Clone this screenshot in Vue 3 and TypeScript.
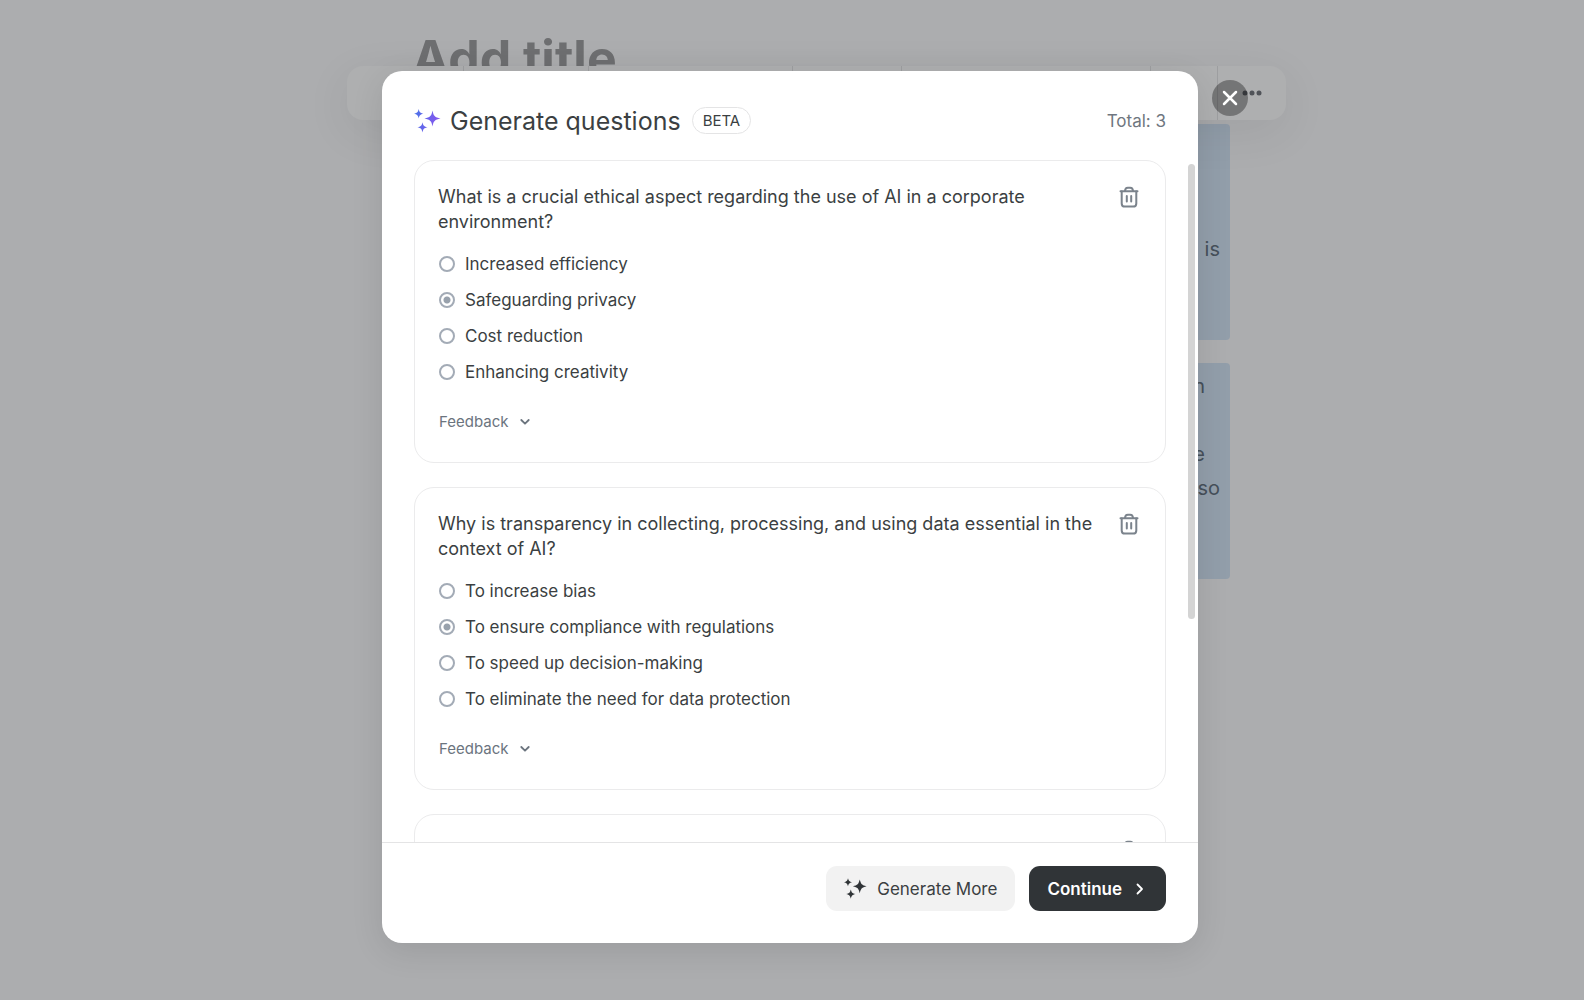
<script setup lang="ts">
import { ref } from 'vue'

interface Question {
  id: number
  text: string
  options: string[]
  answer: number
}

const questions = ref<Question[]>([
  {
    id: 1,
    text: 'What is a crucial ethical aspect regarding the use of AI in a corporate environment?',
    options: ['Increased efficiency', 'Safeguarding privacy', 'Cost reduction', 'Enhancing creativity'],
    answer: 1,
  },
  {
    id: 2,
    text: 'Why is transparency in collecting, processing, and using data essential in the context of AI?',
    options: [
      'To increase bias',
      'To ensure compliance with regulations',
      'To speed up decision-making',
      'To eliminate the need for data protection',
    ],
    answer: 1,
  },
  { id: 3, text: '', options: [], answer: 0 },
])

const total = questions.value.length

function remove(id: number) {
  questions.value = questions.value.filter((q) => q.id !== id)
}
</script>

<template>
  <div class="screen">
    <div class="editor">
      <h1 class="doc-title">Add title</h1>
      <div class="blocks">
        <div class="block">
          <p></p>
          <p></p>
          <p></p>
          <p>is</p>
        </div>
        <div class="block">
          <p class="short">n</p>
          <p></p>
          <p class="short">e</p>
          <p>so</p>
        </div>
      </div>
      <div class="toolbar">
        <span class="tool tool-a"></span>
        <span class="tool tool-b"></span>
        <span class="tool tool-c"></span>
        <span class="tool tool-d"></span>
        <span class="tool tool-e"></span>
        <span class="tool tool-f"></span>
        <span class="more">
          <svg width="20" height="6" viewBox="0 0 20 6" fill="#505358">
            <circle cx="3" cy="3" r="2.5" />
            <circle cx="10" cy="3" r="2.5" />
            <circle cx="17" cy="3" r="2.5" />
          </svg>
        </span>
      </div>
    </div>

    <div class="overlay">
      <section class="modal" role="dialog" aria-labelledby="dialog-title">
        <header class="head">
          <svg class="spark" width="27" height="26" viewBox="0 0 27 26">
            <defs>
              <linearGradient id="spark-fill" gradientUnits="userSpaceOnUse" x1="0" y1="6" x2="27" y2="12">
                <stop offset="0" stop-color="#4a72e8" />
                <stop offset="1" stop-color="#8a55ee" />
              </linearGradient>
            </defs>
            <g fill="url(#spark-fill)">
              <path d="M18.500 2.500C19.500 8 20.800 9.300 26.500 10.500C20.800 11.700 19.500 13 18.500 18.500C17.500 13 16.200 11.700 10.500 10.500C16.200 9.300 17.500 8 18.500 2.500Z" />
              <path d="M4.700 1C5.400 4.200 6.200 5 9.400 5.700C6.200 6.400 5.400 7.200 4.700 10.400C4 7.200 3.200 6.400 0 5.700C3.200 5 4 4.200 4.700 1Z" />
              <path d="M8.500 14.200C9.300 17.800 10 18.500 13.600 19.300C10 20.100 9.300 20.800 8.500 24.400C7.700 20.800 7 20.100 3.400 19.300C7 18.500 7.700 17.800 8.500 14.200Z" />
            </g>
          </svg>
          <h2 id="dialog-title">Generate questions</h2>
          <span class="beta">BETA</span>
          <span class="total">Total: {{ total }}</span>
        </header>

        <div class="list">
          <article v-for="q in questions" :key="q.id" class="card">
            <div class="card-top">
              <p :id="'q' + q.id" class="question">{{ q.text }}</p>
              <button type="button" class="trash" aria-label="Delete question" @click="remove(q.id)">
                <svg width="20" height="22" viewBox="0 0 20 22" fill="none" stroke="#7b838c" stroke-width="2" stroke-linecap="round" stroke-linejoin="round">
                  <path d="M1.500 5.200H18.500" />
                  <path d="M6 5Q6.200 1.700 8.800 1.700H11.200Q13.800 1.700 14 5" />
                  <path d="M2.700 5.400V17.400Q2.700 20.600 5.900 20.600H14.100Q17.300 20.600 17.300 17.400V5.400" />
                  <path d="M7.800 10V15.400M12.200 10V15.400" />
                </svg>
              </button>
            </div>
            <div v-if="q.options.length" class="options" role="radiogroup" :aria-labelledby="'q' + q.id">
              <label v-for="(o, i) in q.options" :key="o" class="option">
                <input v-model="q.answer" type="radio" :name="'answer-' + q.id" :value="i" />
                <span>{{ o }}</span>
              </label>
            </div>
            <button v-if="q.options.length" type="button" class="feedback">
              Feedback
              <svg width="10" height="8" viewBox="0 0 10 8" fill="none" stroke="#6b747e" stroke-width="1.800" stroke-linecap="round" stroke-linejoin="round">
                <path d="M1.300 2L5 5.700L8.700 2" />
              </svg>
            </button>
          </article>
        </div>
        <span class="thumb"></span>

        <footer class="foot">
          <button type="button" class="btn generate">
            <svg width="23" height="23" viewBox="0 0 27 26" fill="#303437">
              <path d="M18.500 2.500C19.900 8 21 9.100 26.500 10.500C21 11.900 19.900 13 18.500 18.500C17.100 13 16 11.900 10.500 10.500C16 9.100 17.100 8 18.500 2.500Z" />
              <path d="M4.700 1C5.700 4.200 6.200 4.700 9.400 5.700C6.200 6.700 5.700 7.200 4.700 10.400C3.700 7.200 3.200 6.700 0 5.700C3.200 4.700 3.700 4.200 4.700 1Z" />
              <path d="M8 14.200C9.100 18 9.600 18.500 13.400 19.600C9.600 20.700 9.100 21.200 8 25C6.900 21.200 6.400 20.700 2.600 19.600C6.400 18.500 6.900 18 8 14.200Z" />
            </svg>
            Generate More
          </button>
          <button type="button" class="btn continue">
            Continue
            <svg width="10" height="14" viewBox="0 0 10 14" fill="none" stroke="#fff" stroke-width="1.800" stroke-linecap="round" stroke-linejoin="round">
              <path d="M2.500 2.500L7 7L2.500 11.500" />
            </svg>
          </button>
        </footer>

        <button type="button" class="close" aria-label="Close">
          <svg width="16" height="16" viewBox="0 0 16 16" stroke="#fff" stroke-width="2.500" stroke-linecap="round">
            <path d="M2 2L14 14M14 2L2 14" />
          </svg>
        </button>
      </section>
    </div>
  </div>
</template>

<style>
body {
  background: #acadaf;
}
</style>

<style scoped>
.screen,
.screen * {
  box-sizing: border-box;
}
.screen {
  position: relative;
  height: 100vh;
  overflow: hidden;
  background: #acadaf;
  font-family: Inter, sans-serif;
  color: #3b3f42;
}
button {
  margin: 0;
  padding: 0;
  border: 0;
  background: none;
  font: inherit;
  color: inherit;
  cursor: pointer;
}
h1,
h2,
p {
  margin: 0;
}
svg {
  display: block;
  flex: none;
}

.editor {
  width: 820px;
  margin: 0 auto;
  padding: 28px 4px 0 30px;
}
.doc-title {
  font-size: 50px;
  line-height: 60px;
  font-weight: 700;
  color: #6e6f71;
}
.toolbar {
  position: absolute;
  top: 66px;
  left: calc(50% - 445px);
  width: 939px;
  height: 54px;
  display: flex;
  border-radius: 16px;
  background: #aeafb0;
  box-shadow: 0 12px 48px rgba(0, 0, 0, 0.07);
}
.tool {
  border-right: 1px solid #9d9ea0;
}
.tool-a { width: 117px; }
.tool-b { width: 125px; }
.tool-c { width: 204px; }
.tool-d { width: 109px; }
.tool-e { width: 249px; }
.tool-f { width: 67px; }
.more {
  padding: 24px 0 0 24px;
}
.blocks {
  display: flex;
  flex-direction: column;
  gap: 23px;
  margin: 36px -32px 0 0;
}
.block {
  height: 216px;
  padding: 6px 10px;
  border-radius: 4px;
  background: #929eaa;
  font-size: 20px;
  line-height: 34px;
  text-align: right;
  color: #46505a;
}
.block p {
  height: 34px;
}
.block .short {
  padding-right: 15px;
}

.overlay {
  position: absolute;
  inset: 0;
  display: flex;
  justify-content: center;
  padding: 71px 4px 57px 0;
}
.modal {
  position: relative;
  display: flex;
  flex-direction: column;
  width: 816px;
  border-radius: 20px;
  background: #fff;
  box-shadow: 0 8px 32px rgba(0, 0, 0, 0.1);
}
.head {
  display: flex;
  align-items: center;
  height: 89px;
  padding: 10px 32px 0;
}
.spark {
  margin-right: 9px;
}
h2 {
  font-size: 25px;
  line-height: 32px;
  font-weight: 400;
}
.beta {
  margin-left: 11px;
  padding: 0 10px;
  border: 1px solid #e4e4e5;
  border-radius: 14px;
  font-size: 15px;
  line-height: 25px;
}
.total {
  margin-left: auto;
  font-size: 17px;
  color: #6f7680;
}
.list {
  flex: 1;
  min-height: 0;
  overflow-y: auto;
  scrollbar-width: none;
  display: flex;
  flex-direction: column;
  gap: 24px;
  padding: 0 32px;
}
.card {
  flex: none;
  height: 303px;
  padding: 23px;
  border: 1px solid #ebebec;
  border-radius: 20px;
}
.card-top {
  display: flex;
  justify-content: space-between;
  align-items: flex-start;
  min-height: 50px;
}
.question {
  width: 672px;
  font-size: 18px;
  line-height: 25px;
}
.trash {
  margin: 2px 3px 0 0;
}
.options {
  margin-top: 12px;
}
.option {
  display: flex;
  align-items: center;
  gap: 10px;
  height: 36px;
  font-size: 17px;
}
.option input {
  appearance: none;
  width: 16px;
  height: 16px;
  margin: 0 0 0 1px;
  border: 2px solid #a3abb6;
  border-radius: 50%;
}
.option input:checked {
  background: radial-gradient(circle, #98a1ac 3px, transparent 4px);
}
.feedback {
  display: flex;
  align-items: center;
  gap: 11px;
  margin: 22px 0 0 1px;
  font-size: 15px;
  line-height: 20px;
  color: #6b747e;
}
.thumb {
  position: absolute;
  top: 93px;
  right: 3px;
  width: 7px;
  height: 455px;
  border-radius: 4px;
  background: #d4d4d4;
}
.foot {
  display: flex;
  justify-content: flex-end;
  gap: 14px;
  padding: 23px 32px 32px;
  border-top: 1px solid #e4e4e5;
}
.btn {
  display: flex;
  align-items: center;
  height: 45px;
  border-radius: 11px;
  font-size: 17px;
}
.generate {
  gap: 10px;
  padding: 0 18px;
  background: #f2f2f2;
}
.continue {
  gap: 13px;
  padding: 0 21px 0 18px;
  background: #303437;
  color: #fff;
  font-weight: 600;
}
.close {
  position: absolute;
  top: 9px;
  right: -50px;
  display: grid;
  place-items: center;
  width: 36px;
  height: 36px;
  border-radius: 50%;
  background: rgba(0, 0, 0, 0.33);
}
</style>
